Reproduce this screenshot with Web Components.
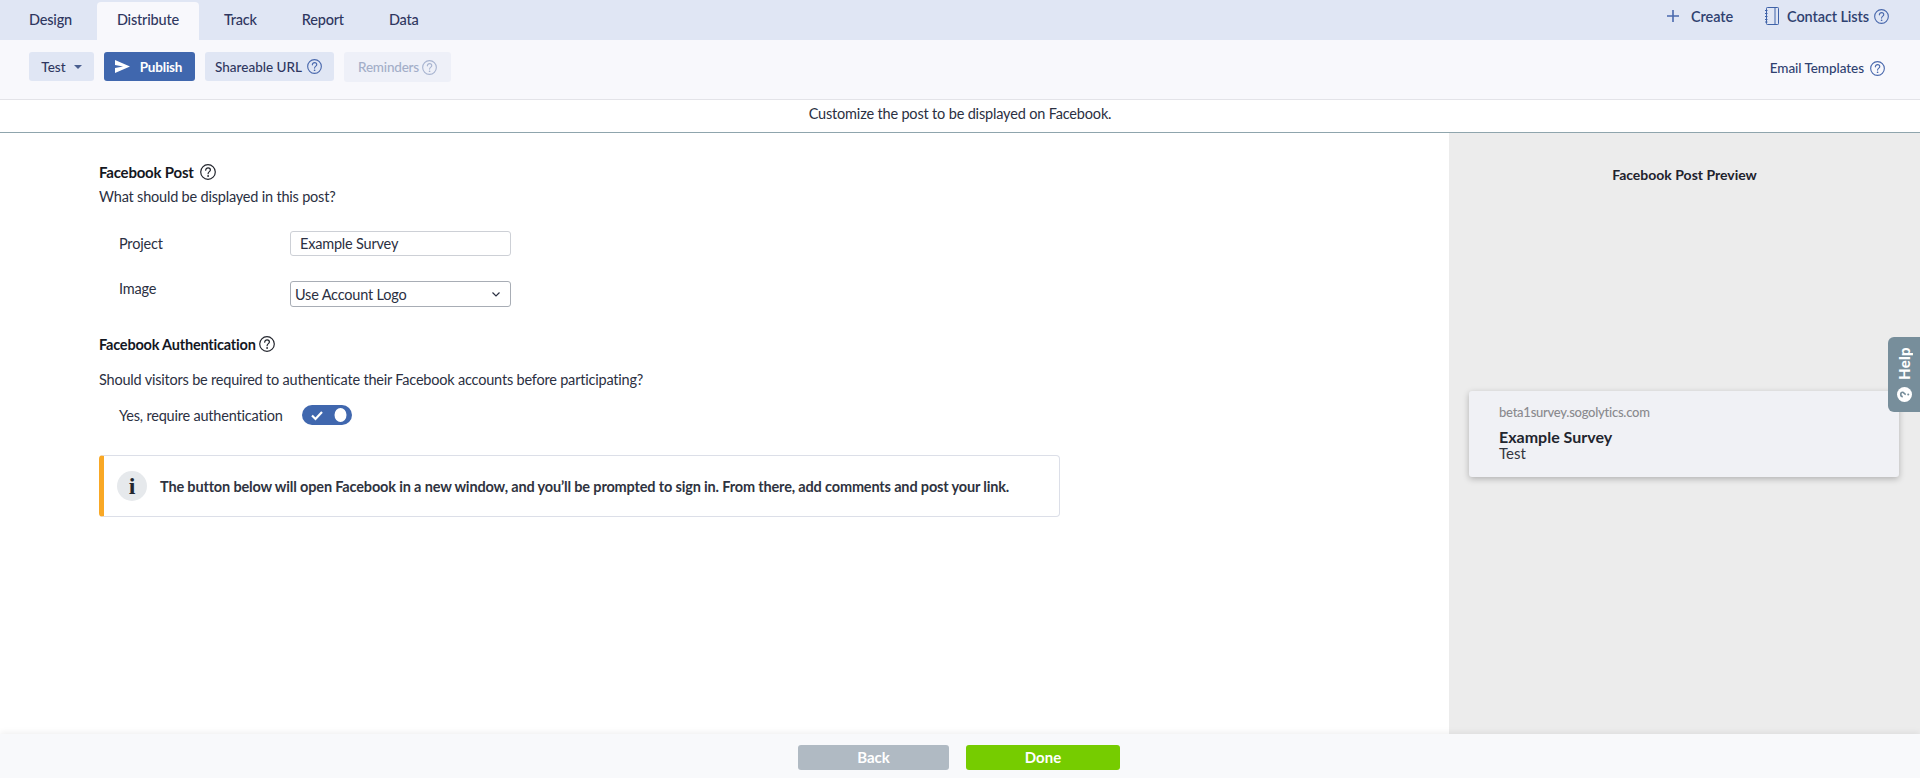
<!DOCTYPE html>
<html lang="en">
<head>
<meta charset="utf-8">
<title>Facebook Post</title>
<style>
  html, body { margin: 0; height: 778px; overflow: hidden; background: #fff; }
  body { font-family: Lato, "Liberation Sans", sans-serif; color: #2b3042; display: flex; flex-direction: column; }
</style>
</head>
<body>
<top-tabs></top-tabs>
<tool-bar></tool-bar>
<notice-bar>Customize the post to be displayed on Facebook.</notice-bar>
<main-area>
  <fb-form slot="left"></fb-form>
  <fb-preview slot="right"></fb-preview>
</main-area>
<action-bar></action-bar>
<help-tab></help-tab>

<script>
function define(name, html) {
  customElements.define(name, class extends HTMLElement {
    constructor() {
      super();
      this.attachShadow({ mode: 'open' }).innerHTML = html;
    }
  });
}

const hint = (size, color, sw) => `
  <svg width="${size}" height="${size}" viewBox="0 0 16 16" fill="none" stroke="${color}" stroke-width="${sw || 1.2}" style="flex:none;display:block">
    <circle cx="8" cy="8" r="7.3"/>
    <path d="M5.7 6.2C5.7 4.8 6.8 3.9 8.1 3.9C9.4 3.9 10.4 4.8 10.4 6C10.4 7.6 8.1 7.7 8.1 9.7" stroke-linecap="round"/>
    <circle cx="8.1" cy="12" r=".9" fill="${color}" stroke="none"/>
  </svg>`;

define('top-tabs', `
  <style>
    :host { display: flex; flex: none; height: 40px; background: #e0e6f4; font-size: 14.5px; letter-spacing: -.2px; font-weight: 500; color: #2f3760; }
    .tabs { display: flex; align-items: flex-end; padding-left: 6.5px; }
    .tab { height: 38px; line-height: 35px; padding: 0 20px; margin: 0 2.5px; }
    .tab.on { background: #f8f8fc; border-radius: 4px 4px 0 0; }
    .right { margin-left: auto; display: flex; align-items: center; padding: 0 31px 8px 0; color: #2f4170; font-weight: 600; font-size: 14.5px; letter-spacing: -.1px; }
    .right svg { display: block; }
    .create { margin: 0 32px 0 12px; }
    .lists { margin: 0 5px 0 8px; }
  </style>
  <div class="tabs">
    <div class="tab">Design</div><div class="tab on">Distribute</div><div class="tab">Track</div><div class="tab">Report</div><div class="tab">Data</div>
  </div>
  <div class="right">
    <svg width="12" height="12" viewBox="0 0 12 12" stroke="#4a69ad" stroke-width="1.6"><path d="M6 0V12M0 6H12"/></svg>
    <span class="create">Create</span>
    <svg width="14" height="18" viewBox="0 0 14 18" fill="none" stroke="#3f62a8" stroke-width="1"><rect x="1.5" y=".5" width="12" height="17" rx=".8"/><path d="M10 .5V17.5"/><path d="M0 3.5H2.5M0 6.5H2.5M0 9.5H2.5M0 12.5H2.5M0 15H2.5"/></svg>
    <span class="lists">Contact Lists</span>
    ${hint(15, '#4a69ad')}
  </div>`);

define('tool-btn', `
  <style>
    :host { display: flex; align-items: center; justify-content: center; box-sizing: border-box; height: 29px; border-radius: 3px; background: #e0e6f4; color: #2f3760; font-size: 13.5px; font-weight: 500; gap: 5px; }
    :host([kind=primary]) { background: #4067ae; color: #fff; font-weight: 700; letter-spacing: -.2px; padding-right: 2px; }
    :host([kind=off]) { background: #eef0f8; color: #a3aec8; height: 30px; letter-spacing: -.2px; }
  </style>
  <slot></slot>`);

define('tool-bar', `
  <style>
    :host { display: flex; flex: none; align-items: flex-start; box-sizing: border-box; height: 60px; padding: 12px 35px 0 29px; background: #f8f8fc; border-bottom: 1px solid #e3e3e8; gap: 10px; }
    .right { margin-left: auto; display: flex; align-items: center; gap: 6px; height: 32px; font-size: 13.5px; letter-spacing: -.05px; font-weight: 500; color: #2f4170; }
  </style>
  <tool-btn style="width:65px;gap:8px">Test <svg width="8" height="4" viewBox="0 0 8 4"><path d="M0 0H8L4 4Z" fill="#4a5f8f"/></svg></tool-btn>
  <tool-btn kind="primary" style="width:91px;gap:10px">
    <svg width="15" height="13" viewBox="0 0 15 13"><path d="M0 0L15 6.5L0 13L0 8L8 6.5L0 5Z" fill="#fff"/></svg>Publish
  </tool-btn>
  <tool-btn style="width:129px;padding-right:2px">Shareable URL ${hint(15, '#4a69ad')}</tool-btn>
  <tool-btn kind="off" style="width:107px;gap:3px">Reminders ${hint(15, '#a8b4d0')}</tool-btn>
  <div class="right">Email Templates ${hint(15, '#4a69ad')}</div>`);

define('notice-bar', `
  <style>
    :host { display: block; flex: none; box-sizing: border-box; height: 33px; line-height: 27px; text-align: center; font-size: 14.5px; letter-spacing: -.17px; color: #2b3042; border-bottom: 1px solid #8fa5ad; }
  </style>
  <slot></slot>`);

define('main-area', `
  <style>
    :host { display: flex; flex: 1; min-height: 0; }
    .left { flex: 1; min-width: 0; padding: 30px 0 0 99px; }
    .right { flex: none; width: 471px; background: #ececec; }
  </style>
  <div class="left"><slot name="left"></slot></div>
  <div class="right"><slot name="right"></slot></div>`);

define('switch-on', `
  <style>
    :host { display: block; width: 50px; height: 20px; }
    svg { display: block; }
  </style>
  <svg width="50" height="20" viewBox="0 0 50 20">
    <rect width="50" height="20" rx="10" fill="#4067ae"/>
    <path d="M10 10.5L13.5 14L20 7" fill="none" stroke="#fff" stroke-width="2.2"/>
    <ellipse cx="38.5" cy="10" rx="6" ry="7" fill="#fff"/>
  </svg>`);

define('info-banner', `
  <style>
    :host { display: flex; align-items: center; box-sizing: border-box; width: 961px; height: 62px; border: 1px solid #dcdfe8; border-left: 5px solid #f9a825; border-radius: 4px; padding-left: 13px; gap: 13px; font-size: 14.5px; letter-spacing: -.16px; font-weight: 700; color: #2f3340; }
    .i { flex: none; width: 30px; height: 30px; border-radius: 50%; background: #e6e9ec; text-align: center; font: 700 24px/30px "Liberation Serif", serif; color: #22262e; }
  </style>
  <div class="i">i</div>
  <div><slot></slot></div>`);

define('fb-form', `
  <style>
    :host { display: block; font-size: 14.5px; letter-spacing: -.2px; color: #2b3042; }
    h3 { display: flex; align-items: center; margin: 0; height: 18px; font-size: 14.5px; font-weight: 700; color: #14171f; }
    h3 svg { margin-left: 3px; }
    p { margin: 0; line-height: 18px; }
    .row { display: flex; align-items: center; padding-left: 20px; }
    .row label { width: 171px; flex: none; }
    .field { box-sizing: border-box; width: 221px; border: 1px solid #cdd0d6; border-radius: 3px; display: flex; align-items: center; }
    .text { height: 25px; padding-left: 9px; }
    .select { height: 26px; padding: 0 10px 0 4px; justify-content: space-between; border-color: #a8adb5; }
  </style>
  <h3><span style="font-size:15px">Facebook Post</span><span style="display:block;width:3px"></span>${hint(16, '#23262e', 1.2)}</h3>
  <p style="margin-top:7px">What should be displayed in this post?</p>
  <div class="row" style="margin-top:25px"><label>Project</label><div class="field text">Example Survey</div></div>
  <div class="row" style="margin-top:25px;align-items:flex-start"><label style="line-height:16px">Image</label><div class="field select">Use Account Logo
    <svg width="8" height="5" viewBox="0 0 8 5" fill="none" stroke="#2b3042" stroke-width="1.2"><path d="M.5 .5L4 4L7.5 .5"/></svg></div></div>
  <h3 style="margin-top:28px">Facebook Authentication${hint(16, '#23262e', 1.2)}</h3>
  <p style="margin-top:18px">Should visitors be required to authenticate their Facebook accounts before participating?</p>
  <div class="row" style="margin-top:16px"><label style="width:183px">Yes, require authentication</label><switch-on></switch-on></div>
  <info-banner style="margin-top:30px">The button below will open Facebook in a new window, and you’ll be prompted to sign in. From there, add comments and post your link.</info-banner>`);

define('fb-preview', `
  <style>
    :host { display: block; padding-top: 33px; }
    h4 { margin: 0; text-align: center; font-size: 14px; line-height: 18px; font-weight: 700; color: #1e222c; }
    .card { box-sizing: border-box; margin: 207px 21px 0 20px; height: 86px; background: #f0f1f5; border-radius: 3px; box-shadow: 0 2px 6px rgba(0,0,0,.25); padding: 13px 30px 0; }
    .url { font-size: 13px; letter-spacing: -.25px; line-height: 16px; color: #8a8a8e; font-weight: 500; }
    .name { margin-top: 8px; font-size: 16px; line-height: 18px; font-weight: 700; color: #22252e; }
    .sub { font-size: 15px; line-height: 14px; color: #33363f; }
  </style>
  <h4>Facebook Post Preview</h4>
  <div class="card">
    <div class="url">beta1survey.sogolytics.com</div>
    <div class="name">Example Survey</div>
    <div class="sub">Test</div>
  </div>`);

define('action-bar', `
  <style>
    :host { display: flex; flex: none; justify-content: center; gap: 17px; box-sizing: border-box; height: 44px; padding: 11px 2px 0 0; background: #f8f9fb; box-shadow: 0 -2px 6px rgba(0,0,0,.06); position: relative; }
    div { height: 25px; line-height: 25px; border-radius: 3px; text-align: center; color: #fff; font-size: 15px; font-weight: 700; }
    .back { width: 151px; background: #b0bac3; }
    .done { width: 154px; background: #76cc00; }
  </style>
  <div class="back">Back</div>
  <div class="done">Done</div>`);

define('help-tab', `
  <style>
    :host { position: absolute; left: 1888px; top: 337px; width: 32px; height: 75px; background: #778e9b; border-radius: 6px 0 0 6px; color: #fff; display: flex; flex-direction: column; align-items: center; gap: 7px; box-sizing: border-box; padding-top: 10px; }
    span { writing-mode: vertical-rl; transform: rotate(180deg); font-size: 15px; font-weight: 900; line-height: 16px; letter-spacing: .3px; }
    svg { display: block; transform: rotate(-90deg); }
  </style>
  <span>Help</span>
  <svg width="15" height="15" viewBox="0 0 16 16"><circle cx="8" cy="8" r="8" fill="#fff"/><path d="M5.8 6.2C5.8 4.8 6.9 4 8.1 4C9.4 4 10.4 4.9 10.4 6C10.4 7.5 8.1 7.6 8.1 9.4" fill="none" stroke="#778e9b" stroke-width="1.8"/><circle cx="8.1" cy="12" r="1.1" fill="#778e9b"/></svg>`);
</script>
</body>
</html>
